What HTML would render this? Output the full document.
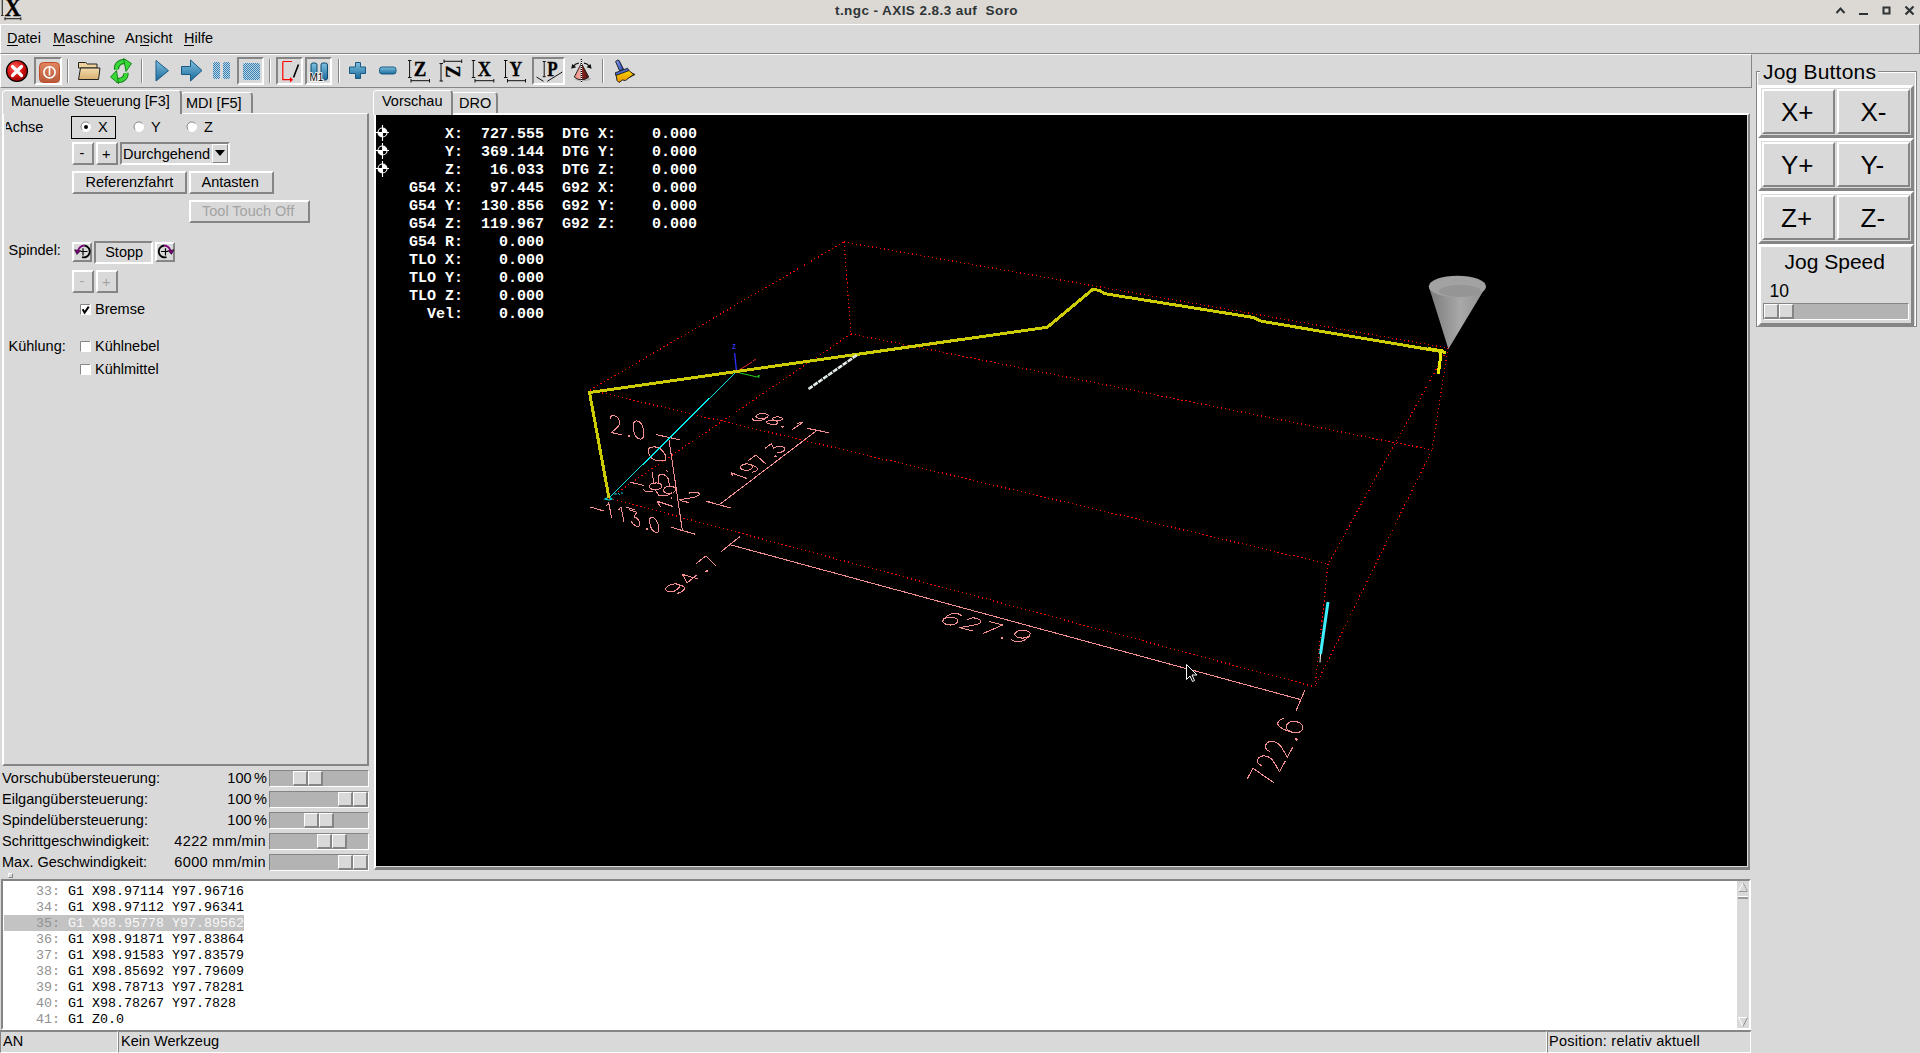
<!DOCTYPE html><html><head><meta charset="utf-8"><style>
*{box-sizing:border-box;margin:0;padding:0}
html,body{width:1920px;height:1053px;overflow:hidden;background:#d9d9d9;font-family:"Liberation Sans",sans-serif;font-size:14.5px;color:#000;position:relative}
.a{position:absolute}
.t{position:absolute;white-space:pre;line-height:1}
.m{font-family:"Liberation Mono",monospace}
svg{position:absolute;overflow:visible}
</style></head><body>
<div class="a" style="left:0px;top:0px;width:1920px;height:24px;background:#dcd9d5"></div>
<div class="a" style="left:0px;top:24px;width:1920px;height:1px;background:#fff"></div>
<div class="t" style="left:835px;top:3.57px;font-size:13.5px;font-weight:bold;color:#2e3436;letter-spacing:0.42px">t.ngc - AXIS 2.8.3 auf  Soro</div>
<svg style="left:0;top:0" width="24" height="24" viewBox="0 0 24 24">
<text x="0" y="0" font-family="Liberation Serif" font-weight="bold" font-size="26" fill="#000" stroke="#000" stroke-width="0.4" transform="translate(4.8 16) scale(0.86 1)">X</text>
<path d="M2.3 -1v16.5M1 15.5h2.6M5 18.7h15.8M5 17.3v3M20.8 17.3v3" stroke="#333" stroke-width="1.2" fill="none"/>
</svg>
<svg style="left:1830px;top:0" width="90" height="24" viewBox="0 0 90 24">
<path d="M6.5 13L10.5 8.5L14.5 13" stroke="#2e3436" stroke-width="2" fill="none"/>
<path d="M29 14h9" stroke="#2e3436" stroke-width="2" fill="none"/>
<rect x="53.5" y="7.5" width="6" height="6" stroke="#2e3436" stroke-width="2" fill="none"/>
<path d="M75.5 6.5L83.5 14.5M83.5 6.5L75.5 14.5" stroke="#2e3436" stroke-width="2.2" fill="none"/>
</svg>
<div class="a" style="left:0px;top:24px;width:1920px;height:30px;background:#d9d9d9;border-style:solid;border-width:1px;border-color:#fff #858585 #858585 #fff"></div>
<div class="t" style="left:7px;top:30.73px;font-size:14.5px;">Datei</div>
<div class="t" style="left:53px;top:30.73px;font-size:14.5px;">Maschine</div>
<div class="t" style="left:125px;top:30.73px;font-size:14.5px;">Ansicht</div>
<div class="t" style="left:184px;top:30.73px;font-size:14.5px;">Hilfe</div>
<div class="a" style="left:7px;top:45px;width:11px;height:1px;background:#000"></div>
<div class="a" style="left:53px;top:45px;width:12px;height:1px;background:#000"></div>
<div class="a" style="left:140px;top:45px;width:9px;height:1px;background:#000"></div>
<div class="a" style="left:184px;top:45px;width:10px;height:1px;background:#000"></div>
<div class="a" style="left:0px;top:54px;width:1752px;height:34px;background:#d9d9d9;border-style:solid;border-width:1px;border-color:#fff #858585 #858585 #fff"></div>
<div class="a" style="left:67px;top:59px;width:1px;height:24px;background:#858585"></div>
<div class="a" style="left:68px;top:59px;width:1px;height:24px;background:#fff"></div>
<div class="a" style="left:141px;top:59px;width:1px;height:24px;background:#858585"></div>
<div class="a" style="left:142px;top:59px;width:1px;height:24px;background:#fff"></div>
<div class="a" style="left:269px;top:59px;width:1px;height:24px;background:#858585"></div>
<div class="a" style="left:270px;top:59px;width:1px;height:24px;background:#fff"></div>
<div class="a" style="left:338px;top:59px;width:1px;height:24px;background:#858585"></div>
<div class="a" style="left:339px;top:59px;width:1px;height:24px;background:#fff"></div>
<div class="a" style="left:602px;top:59px;width:1px;height:24px;background:#858585"></div>
<div class="a" style="left:603px;top:59px;width:1px;height:24px;background:#fff"></div>
<div class="a" style="left:34px;top:57px;width:28px;height:28px;background:#d9d9d9;border-style:solid;border-width:2px;border-color:#858585 #fff #fff #858585"></div>
<div class="a" style="left:237px;top:57px;width:27px;height:28px;background:#d9d9d9;border-style:solid;border-width:2px;border-color:#858585 #fff #fff #858585"></div>
<div class="a" style="left:276px;top:57px;width:27px;height:28px;background:#d9d9d9;border-style:solid;border-width:2px;border-color:#858585 #fff #fff #858585"></div>
<div class="a" style="left:305px;top:57px;width:27px;height:28px;background:#d9d9d9;border-style:solid;border-width:2px;border-color:#858585 #fff #fff #858585"></div>
<div class="a" style="left:532px;top:57px;width:33px;height:28px;background:#d9d9d9;border-style:solid;border-width:2px;border-color:#858585 #fff #fff #858585"></div>
<svg style="left:0;top:54px" width="660" height="34" viewBox="0 54 660 34">
<defs>
<radialGradient id="gRed" cx="0.4" cy="0.35" r="0.7"><stop offset="0" stop-color="#ff5a5a"/><stop offset="0.6" stop-color="#d01010"/><stop offset="1" stop-color="#8a0000"/></radialGradient>
<linearGradient id="gOr" x1="0" y1="0" x2="0" y2="1"><stop offset="0" stop-color="#e08660"/><stop offset="1" stop-color="#b85a3a"/></linearGradient>
<linearGradient id="gBlue" x1="0" y1="0" x2="0" y2="1"><stop offset="0" stop-color="#7fc0e0"/><stop offset="1" stop-color="#1a6a9a"/></linearGradient>
<linearGradient id="gFold" x1="0" y1="0" x2="0" y2="1"><stop offset="0" stop-color="#f3dcae"/><stop offset="1" stop-color="#d9b070"/></linearGradient>
<linearGradient id="gCone" x1="0" y1="0" x2="1" y2="0"><stop offset="0" stop-color="#f6a0a0"/><stop offset="0.5" stop-color="#c04040"/><stop offset="1" stop-color="#501010"/></linearGradient>
<pattern id="dots" width="2" height="2" patternUnits="userSpaceOnUse"><rect width="1" height="1" fill="#3a7fb0"/><rect x="1" y="1" width="1" height="1" fill="#3a7fb0"/><rect x="1" width="1" height="1" fill="#b8d8ea"/><rect y="1" width="1" height="1" fill="#b8d8ea"/></pattern>
</defs>
<!-- estop -->
<circle cx="17" cy="71" r="10.5" fill="url(#gRed)" stroke="#000" stroke-width="1.2"/>
<path d="M12.5 66.5L21.5 75.5M21.5 66.5L12.5 75.5" stroke="#fff" stroke-width="3.2" stroke-linecap="round"/>
<!-- power -->
<rect x="39.5" y="62.5" width="20" height="20" rx="4" fill="url(#gOr)" stroke="#c04a2a" stroke-width="1"/>
<circle cx="49.5" cy="72.3" r="5.6" fill="none" stroke="#fff" stroke-width="1.6"/>
<path d="M49.5 66.5v9" stroke="#fff" stroke-width="1.6"/>
<!-- folder -->
<path d="M78.5 62.5h7l2 1.5h9.5v4h-18.5z" fill="#efd39c" stroke="#222" stroke-width="1"/>
<path d="M78.5 79.5l2-11.5h19.5l-1.5 11.5z" fill="url(#gFold)" stroke="#222" stroke-width="1"/>
<!-- reload -->
<path d="M116.5 69.5C116 64 121 60.5 125.5 62" stroke="#107a10" stroke-width="5.2" fill="none"/>
<path d="M116.5 69.5C116 64 121 60.5 125.5 62" stroke="#38d838" stroke-width="3.4" fill="none"/>
<path d="M123.5 58.5L131.5 63.5L126 71.5Z" fill="#38d838" stroke="#107a10" stroke-width="0.9" stroke-linejoin="round"/>
<path d="M126 73C126.5 78 121.5 81.5 117 80" stroke="#107a10" stroke-width="5.2" fill="none"/>
<path d="M126 73C126.5 78 121.5 81.5 117 80" stroke="#38d838" stroke-width="3.4" fill="none"/>
<path d="M118.5 83.5L110.5 77L116.5 70.5Z" fill="#38d838" stroke="#107a10" stroke-width="0.9" stroke-linejoin="round"/>
<!-- play -->
<path d="M156 60.5v20.5l12.5-10.3z" fill="url(#gBlue)" stroke="#185a86" stroke-width="1" stroke-linejoin="round"/>
<!-- step -->
<path d="M181.5 66.5h9v-6.5l11.5 10.5l-11.5 10.5v-6.5h-9z" fill="url(#gBlue)" stroke="#185a86" stroke-width="1" stroke-linejoin="round"/>
<!-- pause -->
<rect x="213" y="62" width="7" height="17" rx="2" fill="url(#dots)"/>
<rect x="223" y="62" width="7" height="17" rx="2" fill="url(#dots)"/>
<!-- stop -->
<rect x="243" y="63" width="17" height="17" rx="2" fill="url(#dots)"/>
<!-- block delete -->
<path d="M283 61.5h9M282.8 61.5v18.2h8" stroke="#f00" stroke-width="1.2" fill="none"/>
<path d="M290 77l3 2.7l-3 2.7z" fill="#f00"/>
<path d="M298.5 64.5l-5 13" stroke="#000" stroke-width="1.6"/>
<!-- M1 -->
<rect x="311" y="63" width="6" height="17" rx="2" fill="url(#gBlue)" stroke="#0a4a70" stroke-width="1"/>
<rect x="321" y="63" width="6.5" height="17" rx="2" fill="url(#gBlue)" stroke="#0a4a70" stroke-width="1"/>
<text x="309.5" y="81" font-family="Liberation Sans" font-size="10" fill="#000" stroke="#fff" stroke-width="1.6" paint-order="stroke">M1</text>
<!-- plus -->
<path d="M355.5 62.5h5v4.5h5v6.5h-5v5h-5v-5h-6v-6.5h6z" fill="url(#gBlue)" stroke="#185a86" stroke-width="1" stroke-linejoin="round"/>
<!-- minus -->
<rect x="379.5" y="67" width="16.5" height="7" rx="2.5" fill="url(#gBlue)" stroke="#185a86" stroke-width="1"/>
<!-- views -->
<g stroke="#111" stroke-width="1" fill="none">
<path d="M409.6 60.5v17M408 60.5h3.5M408 77.5h3.5M411 80.7h18.5M411 79v3.5M429.5 79v3.5"/>
<path d="M441 63.5v17.5M439.5 63.5h3.5M439.5 81h3.5M444 61.3h17.7M444 59.5v3.5M461.7 59.5v3.5"/>
<path d="M473.3 60.5v17M471.8 60.5h3.5M471.8 77.5h3.5M475 80.7h18.8M475 79v3.5M493.8 79v3.5"/>
<path d="M505.5 60.5v17M504 60.5h3.5M504 77.5h3.5M507.5 80.7h18M507.5 79v3.5M525.5 79v3.5"/>
<path d="M544.2 61.5v15.2M542.7 61.5h3M542.7 76.7h3"/>
<path d="M536.5 77l7 4.3M547.3 81.3l15-9.3"/>
</g>
<text transform="translate(413.8 76.2) scale(0.95 1)" font-family="Liberation Serif" font-weight="bold" font-size="20" fill="#000" stroke="#000" stroke-width="0.3">Z</text>
<text transform="translate(445.8 65.5) rotate(90) scale(0.92 1)" x="0" y="0" font-family="Liberation Serif" font-weight="bold" font-size="20" fill="#000" stroke="#000" stroke-width="0.3">Z</text>
<text transform="translate(477.8 76.2) scale(0.92 1)" font-family="Liberation Serif" font-weight="bold" font-size="20" fill="#000" stroke="#000" stroke-width="0.3">X</text>
<text transform="translate(509.5 76.2) scale(0.88 1)" font-family="Liberation Serif" font-weight="bold" font-size="20" fill="#000" stroke="#000" stroke-width="0.3">Y</text>
<text transform="translate(547.2 76.4) scale(0.85 1)" font-family="Liberation Serif" font-weight="bold" font-size="20" fill="#000" stroke="#000" stroke-width="0.3">P</text>
<!-- rotate cone -->
<defs>
<linearGradient id="gConeL" x1="0" y1="0" x2="1" y2="0"><stop offset="0" stop-color="#f08a80"/><stop offset="1" stop-color="#f4b0a8"/></linearGradient>
<linearGradient id="gConeR" x1="0" y1="0" x2="1" y2="0"><stop offset="0" stop-color="#902820"/><stop offset="1" stop-color="#501010"/></linearGradient>
<linearGradient id="gBr" x1="0" y1="0" x2="0" y2="1"><stop offset="0" stop-color="#f8d800"/><stop offset="1" stop-color="#e89000"/></linearGradient>
<linearGradient id="gHd" x1="0" y1="0" x2="1" y2="0"><stop offset="0" stop-color="#8aa0f0"/><stop offset="1" stop-color="#2040b0"/></linearGradient>
</defs>
<ellipse cx="583" cy="79" rx="8" ry="2.2" fill="#000" opacity="0.18"/>
<path d="M581.4 63.3L574.3 77Q577.5 79.8 581.4 79.8V63.3Z" fill="url(#gConeL)" stroke="#111" stroke-width="0.9" stroke-linejoin="round"/>
<path d="M581.4 63.3L588.7 77Q585.5 79.8 581.4 79.8V63.3Z" fill="url(#gConeR)" stroke="#111" stroke-width="0.9" stroke-linejoin="round"/>
<path d="M581.4 59v24" stroke="#fff" stroke-width="1.3"/>
<path d="M581.4 59v24" stroke="#000" stroke-width="1.3" stroke-dasharray="1 1"/>
<path d="M578.8 63.2Q575.5 63.5 573.5 66.2M584 63.2Q587.3 63.5 589.3 66.2" stroke="#111" stroke-width="1.2" fill="none"/>
<path d="M571.2 68.7L572.2 63.9L576.3 67.3Z M591.6 68.7L590.6 63.9L586.5 67.3Z" fill="#111"/>
<!-- brush -->
<path d="M630.5 72.5L635 74.5L627 78.5Z" fill="#e8b000" stroke="#111" stroke-width="0.9" stroke-linejoin="round"/>
<path d="M615.5 74.5L628.5 70L633.5 74.5L628 78.5L625.5 80.5L622.5 80L619 82.5L617 80.5L616.5 77Z" fill="url(#gBr)" stroke="#111" stroke-width="0.9" stroke-linejoin="round"/>
<path d="M615.2 72.8L627.6 68.2L628.8 70.7L616.2 75.3Z" fill="#4a68c8" stroke="#111" stroke-width="0.8" stroke-linejoin="round"/>
<path d="M615.6 61.6Q617.2 59.2 619.2 60.6L623.5 69.2L619.6 70.8Z" fill="url(#gHd)" stroke="#111" stroke-width="0.9" stroke-linejoin="round"/>
</svg>
<div class="a" style="left:2px;top:113px;width:367px;height:653px;border-style:solid;border-width:1px 2px 2px 2px;border-color:#fff #858585 #858585 #fff"></div>
<div class="a" style="left:181px;top:92px;width:72px;height:21px;background:#d9d9d9;border-style:solid;border-width:1px 2px 0 1px;border-color:#fff #858585 #fff #fff;border-radius:4px 4px 0 0"></div>
<div class="t" style="left:186px;top:95.73px;font-size:14.5px;">MDI [F5]</div>
<div class="a" style="left:2px;top:90px;width:180px;height:24px;background:#d9d9d9;border-style:solid;border-width:1px 2px 0 1px;border-color:#fff #858585 #fff #fff;border-radius:4px 4px 0 0"></div>
<div class="t" style="left:11px;top:93.73px;font-size:14.5px;">Manuelle Steuerung [F3]</div>
<div class="a" style="left:5.5px;top:116px;width:50px;height:22px;overflow:hidden"><div class="t" style="left:-2.5px;top:3.53px;font-size:14.5px">Achse</div></div>
<div class="a" style="left:71px;top:116px;width:45px;height:23px;border:1.5px solid #000"></div>
<svg style="left:80px;top:120.8px" width="12" height="12" viewBox="0 0 12 12"><circle cx="6" cy="6" r="4.6" fill="#fff" stroke="#fff" stroke-width="1"/><path d="M2.2 8.8A4.6 4.6 0 0 1 9.4 2.6" stroke="#858585" stroke-width="1" fill="none"/><circle cx="6" cy="6" r="2" fill="#000"/></svg>
<div class="t" style="left:98px;top:119.73px;font-size:14.5px;">X</div>
<svg style="left:133px;top:120.8px" width="12" height="12" viewBox="0 0 12 12"><circle cx="6" cy="6" r="4.6" fill="#fff" stroke="#fff" stroke-width="1"/><path d="M2.2 8.8A4.6 4.6 0 0 1 9.4 2.6" stroke="#858585" stroke-width="1" fill="none"/></svg>
<div class="t" style="left:151px;top:119.73px;font-size:14.5px;">Y</div>
<svg style="left:186px;top:120.8px" width="12" height="12" viewBox="0 0 12 12"><circle cx="6" cy="6" r="4.6" fill="#fff" stroke="#fff" stroke-width="1"/><path d="M2.2 8.8A4.6 4.6 0 0 1 9.4 2.6" stroke="#858585" stroke-width="1" fill="none"/></svg>
<div class="t" style="left:204px;top:119.73px;font-size:14.5px;">Z</div>
<div class="a" style="left:72px;top:142px;width:22px;height:23px;background:#d9d9d9;border-style:solid;border-width:2px;border-color:#fff #858585 #858585 #fff"></div>
<div class="t" style="left:79.5px;top:145.73px;font-size:14.5px;">-</div>
<div class="a" style="left:96px;top:142px;width:22px;height:23px;background:#d9d9d9;border-style:solid;border-width:2px;border-color:#fff #858585 #858585 #fff"></div>
<div class="t" style="left:102px;top:146.73px;font-size:14.5px;">+</div>
<div class="a" style="left:120px;top:142px;width:110px;height:23px;background:#d9d9d9;border-style:solid;border-width:2px;border-color:#858585 #fff #fff #858585"></div>
<div class="a" style="left:122px;top:144px;width:90px;height:19px;background:#d9d9d9"></div>
<div class="t" style="left:123px;top:146.73px;font-size:14.5px;">Durchgehend</div>
<div class="a" style="left:212px;top:144px;width:16px;height:19px;background:#d9d9d9;border-style:solid;border-width:1px;border-color:#fff #858585 #858585 #fff"></div>
<svg style="left:213px;top:148px" width="14" height="10" viewBox="0 0 14 10"><path d="M2 2h10l-5 6z" fill="#000"/></svg>
<div class="a" style="left:72px;top:171px;width:115px;height:23px;background:#d9d9d9;border-style:solid;border-width:2px;border-color:#fff #858585 #858585 #fff"></div>
<div class="t" style="left:85.5px;top:174.73px;font-size:14.5px;">Referenzfahrt</div>
<div class="a" style="left:189px;top:171px;width:85px;height:23px;background:#d9d9d9;border-style:solid;border-width:2px;border-color:#fff #858585 #858585 #fff"></div>
<div class="t" style="left:201.5px;top:174.73px;font-size:14.5px;">Antasten</div>
<div class="a" style="left:189px;top:200px;width:121px;height:23px;background:#d9d9d9;border-style:solid;border-width:2px;border-color:#fff #858585 #858585 #fff"></div>
<div class="t" style="left:202px;top:203.73px;font-size:14.5px;color:#a3a3a3">Tool Touch Off</div>
<div class="t" style="left:8.5px;top:242.73px;font-size:14.5px;">Spindel:</div>
<div class="a" style="left:72px;top:242px;width:20px;height:20px;background:#d9d9d9;border-style:solid;border-width:2px;border-color:#fff #858585 #858585 #fff"></div>
<div class="a" style="left:94px;top:241px;width:59px;height:23px;background:#d9d9d9;border-style:solid;border-width:2px;border-color:#858585 #fff #fff #858585"></div>
<div class="t" style="left:105.2px;top:244.93px;font-size:14.5px;">Stopp</div>
<div class="a" style="left:155px;top:242px;width:20px;height:20px;background:#d9d9d9;border-style:solid;border-width:2px;border-color:#fff #858585 #858585 #fff"></div>
<svg style="left:72px;top:242px" width="104" height="20" viewBox="72 242 104 20">
<g><path d="M84.5 245.5A6 6 0 1 1 82 257.2" stroke="#000" stroke-width="1.8" fill="none"/>
<path d="M80.5 251.5H87.5M83 248.2V255.5" stroke="#000" stroke-width="1.2" fill="none"/>
<path d="M84.5 245.5Q80 245.8 78.2 250" stroke="#7a007a" stroke-width="1.8" fill="none"/>
<path d="M74.5 249.8L80.8 250.5L77 254.5Z" fill="#7a007a" stroke="#000" stroke-width="0.5"/></g>
<g transform="matrix(-1 0 0 1 248.5 0)"><path d="M84.5 245.5A6 6 0 1 1 82 257.2" stroke="#000" stroke-width="1.8" fill="none"/>
<path d="M80.5 251.5H87.5M83 248.2V255.5" stroke="#000" stroke-width="1.2" fill="none"/>
<path d="M84.5 245.5Q80 245.8 78.2 250" stroke="#7a007a" stroke-width="1.8" fill="none"/>
<path d="M74.5 249.8L80.8 250.5L77 254.5Z" fill="#7a007a" stroke="#000" stroke-width="0.5"/></g>
</svg>
<div class="a" style="left:72px;top:270px;width:22px;height:23px;background:#d9d9d9;border-style:solid;border-width:2px;border-color:#fff #858585 #858585 #fff"></div>
<div class="t" style="left:79.5px;top:273.73px;font-size:14.5px;color:#a3a3a3">-</div>
<div class="a" style="left:96px;top:270px;width:22px;height:23px;background:#d9d9d9;border-style:solid;border-width:2px;border-color:#fff #858585 #858585 #fff"></div>
<div class="t" style="left:102px;top:274.73px;font-size:14.5px;color:#a3a3a3">+</div>
<svg style="left:80px;top:304px" width="11" height="11" viewBox="0 0 11 11"><rect x="0" y="0" width="11" height="11" fill="#fff"/><path d="M0.5 10.5V0.5H10" stroke="#858585" stroke-width="1" fill="none"/><path d="M2.6 5.2L4.6 8.6L8.8 2.6" stroke="#000" stroke-width="2" fill="none"/></svg>
<div class="t" style="left:95px;top:301.73px;font-size:14.5px;">Bremse</div>
<div class="t" style="left:8.5px;top:338.73px;font-size:14.5px;">Kühlung:</div>
<svg style="left:80px;top:341px" width="11" height="11" viewBox="0 0 11 11"><rect x="0" y="0" width="11" height="11" fill="#fff"/><path d="M0.5 10.5V0.5H10" stroke="#858585" stroke-width="1" fill="none"/></svg>
<div class="t" style="left:95px;top:338.73px;font-size:14.5px;">Kühlnebel</div>
<svg style="left:80px;top:364px" width="11" height="11" viewBox="0 0 11 11"><rect x="0" y="0" width="11" height="11" fill="#fff"/><path d="M0.5 10.5V0.5H10" stroke="#858585" stroke-width="1" fill="none"/></svg>
<div class="t" style="left:95px;top:361.73px;font-size:14.5px;">Kühlmittel</div>
<div class="t" style="left:2px;top:771.03px;font-size:14.5px;">Vorschubübersteuerung:</div>
<div class="t" style="left:150px;width:117px;text-align:right;top:771.03px;font-size:14.5px">100<span style="letter-spacing:-1.5px"> </span>%</div>
<div class="a" style="left:269px;top:770px;width:100px;height:17px;background:#b3b3b3;border-style:solid;border-width:1px;border-color:#858585 #fff #fff #858585"></div>
<div class="a" style="left:293px;top:771px;width:15px;height:15px;background:#d9d9d9;border-style:solid;border-width:1px 2px 2px 1px;border-color:#fff #858585 #858585 #fff"></div>
<div class="a" style="left:308px;top:771px;width:15px;height:15px;background:#d9d9d9;border-style:solid;border-width:1px 2px 2px 1px;border-color:#fff #858585 #858585 #fff"></div>
<div class="t" style="left:2px;top:792.03px;font-size:14.5px;">Eilgangübersteuerung:</div>
<div class="t" style="left:150px;width:117px;text-align:right;top:792.03px;font-size:14.5px">100<span style="letter-spacing:-1.5px"> </span>%</div>
<div class="a" style="left:269px;top:791px;width:100px;height:17px;background:#b3b3b3;border-style:solid;border-width:1px;border-color:#858585 #fff #fff #858585"></div>
<div class="a" style="left:338px;top:792px;width:15px;height:15px;background:#d9d9d9;border-style:solid;border-width:1px 2px 2px 1px;border-color:#fff #858585 #858585 #fff"></div>
<div class="a" style="left:353px;top:792px;width:15px;height:15px;background:#d9d9d9;border-style:solid;border-width:1px 2px 2px 1px;border-color:#fff #858585 #858585 #fff"></div>
<div class="t" style="left:2px;top:813.03px;font-size:14.5px;">Spindelübersteuerung:</div>
<div class="t" style="left:150px;width:117px;text-align:right;top:813.03px;font-size:14.5px">100<span style="letter-spacing:-1.5px"> </span>%</div>
<div class="a" style="left:269px;top:812px;width:100px;height:17px;background:#b3b3b3;border-style:solid;border-width:1px;border-color:#858585 #fff #fff #858585"></div>
<div class="a" style="left:304px;top:813px;width:15px;height:15px;background:#d9d9d9;border-style:solid;border-width:1px 2px 2px 1px;border-color:#fff #858585 #858585 #fff"></div>
<div class="a" style="left:319px;top:813px;width:15px;height:15px;background:#d9d9d9;border-style:solid;border-width:1px 2px 2px 1px;border-color:#fff #858585 #858585 #fff"></div>
<div class="t" style="left:2px;top:834.03px;font-size:14.5px;">Schrittgeschwindigkeit:</div>
<div class="t" style="left:100px;width:166px;text-align:right;top:834.03px;font-size:14.5px;letter-spacing:0.35px">4222 mm/min</div>
<div class="a" style="left:269px;top:833px;width:100px;height:17px;background:#b3b3b3;border-style:solid;border-width:1px;border-color:#858585 #fff #fff #858585"></div>
<div class="a" style="left:317px;top:834px;width:15px;height:15px;background:#d9d9d9;border-style:solid;border-width:1px 2px 2px 1px;border-color:#fff #858585 #858585 #fff"></div>
<div class="a" style="left:332px;top:834px;width:15px;height:15px;background:#d9d9d9;border-style:solid;border-width:1px 2px 2px 1px;border-color:#fff #858585 #858585 #fff"></div>
<div class="t" style="left:2px;top:855.03px;font-size:14.5px;">Max. Geschwindigkeit:</div>
<div class="t" style="left:100px;width:166px;text-align:right;top:855.03px;font-size:14.5px;letter-spacing:0.35px">6000 mm/min</div>
<div class="a" style="left:269px;top:854px;width:100px;height:17px;background:#b3b3b3;border-style:solid;border-width:1px;border-color:#858585 #fff #fff #858585"></div>
<div class="a" style="left:338px;top:855px;width:15px;height:15px;background:#d9d9d9;border-style:solid;border-width:1px 2px 2px 1px;border-color:#fff #858585 #858585 #fff"></div>
<div class="a" style="left:353px;top:855px;width:15px;height:15px;background:#d9d9d9;border-style:solid;border-width:1px 2px 2px 1px;border-color:#fff #858585 #858585 #fff"></div>
<div class="a" style="left:374px;top:113px;width:1376px;height:757px;border-style:solid;border-width:2px 2px 3px 2px;border-color:#fff #858585 #858585 #fff"></div>
<div class="a" style="left:376px;top:115px;width:1371px;height:751px;background:#000"></div>
<div class="a" style="left:451px;top:92px;width:47px;height:21px;background:#d9d9d9;border-style:solid;border-width:1px 2px 0 1px;border-color:#fff #858585 #fff #fff;border-radius:4px 4px 0 0"></div>
<div class="t" style="left:459px;top:95.73px;font-size:14.5px;">DRO</div>
<div class="a" style="left:373px;top:90px;width:80px;height:25px;background:#d9d9d9;border-style:solid;border-width:1px 2px 0 1px;border-color:#fff #858585 #fff #fff;border-radius:4px 4px 0 0"></div>
<div class="t" style="left:382px;top:93.73px;font-size:14.5px;">Vorschau</div>
<div class="t m" style="left:409px;top:126.80px;font-size:15px;font-weight:bold;color:#fff">    X:  727.555  DTG X:    0.000</div>
<div class="t m" style="left:409px;top:144.80px;font-size:15px;font-weight:bold;color:#fff">    Y:  369.144  DTG Y:    0.000</div>
<div class="t m" style="left:409px;top:162.80px;font-size:15px;font-weight:bold;color:#fff">    Z:   16.033  DTG Z:    0.000</div>
<div class="t m" style="left:409px;top:180.80px;font-size:15px;font-weight:bold;color:#fff">G54 X:   97.445  G92 X:    0.000</div>
<div class="t m" style="left:409px;top:198.80px;font-size:15px;font-weight:bold;color:#fff">G54 Y:  130.856  G92 Y:    0.000</div>
<div class="t m" style="left:409px;top:216.80px;font-size:15px;font-weight:bold;color:#fff">G54 Z:  119.967  G92 Z:    0.000</div>
<div class="t m" style="left:409px;top:234.80px;font-size:15px;font-weight:bold;color:#fff">G54 R:    0.000</div>
<div class="t m" style="left:409px;top:252.80px;font-size:15px;font-weight:bold;color:#fff">TLO X:    0.000</div>
<div class="t m" style="left:409px;top:270.80px;font-size:15px;font-weight:bold;color:#fff">TLO Y:    0.000</div>
<div class="t m" style="left:409px;top:288.80px;font-size:15px;font-weight:bold;color:#fff">TLO Z:    0.000</div>
<div class="t m" style="left:409px;top:306.80px;font-size:15px;font-weight:bold;color:#fff">  Vel:    0.000</div>
<svg style="left:374px;top:123.0px" width="18" height="19" viewBox="374 123.0 18 19">
<circle cx="382.5" cy="132.5" r="4.5" fill="none" stroke="#fff" stroke-width="1.1"/>
<path d="M382.5 132.5V128.0A4.5 4.5 0 0 1 387 132.5Z M382.5 132.5V137.0A4.5 4.5 0 0 1 378 132.5Z" fill="#fff"/>
<path d="M375.8 132.5H389M382.5 124.9V141.0" stroke="#fff" stroke-width="1.1"/>
</svg>
<svg style="left:374px;top:141.0px" width="18" height="19" viewBox="374 141.0 18 19">
<circle cx="382.5" cy="150.5" r="4.5" fill="none" stroke="#fff" stroke-width="1.1"/>
<path d="M382.5 150.5V146.0A4.5 4.5 0 0 1 387 150.5Z M382.5 150.5V155.0A4.5 4.5 0 0 1 378 150.5Z" fill="#fff"/>
<path d="M375.8 150.5H389M382.5 142.9V159.0" stroke="#fff" stroke-width="1.1"/>
</svg>
<svg style="left:374px;top:159.0px" width="18" height="19" viewBox="374 159.0 18 19">
<circle cx="382.5" cy="168.5" r="4.5" fill="none" stroke="#fff" stroke-width="1.1"/>
<path d="M382.5 168.5V164.0A4.5 4.5 0 0 1 387 168.5Z M382.5 168.5V173.0A4.5 4.5 0 0 1 378 168.5Z" fill="#fff"/>
<path d="M375.8 168.5H389M382.5 160.9V177.0" stroke="#fff" stroke-width="1.1"/>
</svg>
<svg style="left:376px;top:115px" width="1372" height="752" viewBox="376 115 1372 752">
<g stroke="#ff0000" stroke-width="1.2" stroke-dasharray="1.15 2.91" shape-rendering="crispEdges" fill="none">
<path d="M590 390L844 242"/>
<path d="M844 242L851 334"/>
<path d="M851 334L609 498"/>
<path d="M609 498L590 390"/>
<path d="M844 242L1448 348"/>
<path d="M851 334L1432 450"/>
<path d="M590 390L1328 564"/>
<path d="M609 498L1315 687"/>
<path d="M1448 348L1432 450"/>
<path d="M1448 348L1328 564"/>
<path d="M1432 450L1315 687"/>
<path d="M1328 564L1315 687"/>
</g>
<g stroke="#f29090" stroke-width="1.05" fill="none" stroke-linecap="round" stroke-linejoin="round" shape-rendering="crispEdges">
<path d="M731.9 545.2L1299.6 699.3"/>
<path d="M721 551.7L739.5 537"/>
<path d="M1305 690L1296 710.8"/>
<path d="M720.5 503.8L816.2 430.9"/>
<path d="M706.8 501.6L730.2 507.8"/>
<path d="M807.1 428.3L828.2 432.6"/>
<path d="M668.6 437.2L682.3 530"/>
<path d="M656.4 434.7L680 439.8"/>
<path d="M671.6 527.4L694.4 534"/>
<path d="M590.3 507L604 511"/>
<path d="M630.3 482.2L644 485.5"/>
<path d="M707.1 501.2L715 503.8"/>
<path d="M626.3 507.2L635 509.8"/>
<g transform="matrix(1.37 0.34 -0.78 0.77 950.8 612)"><path transform="translate(0 0)" d="M9 1.5C8 0.5 6.5 0 5 0C1.5 0 0 3.5 0 8C0 12 2 14 5 14C8 14 10 12 10 9.5C10 7 8 5 5 5C2.5 5 0.5 6.5 0 9" vector-effect="non-scaling-stroke"/><path transform="translate(14 0)" d="M0.5 3.5C0.5 1.5 2.5 0 5 0C7.5 0 9.5 1.5 9.5 4C9.5 6.5 7 8.5 0 14H10" vector-effect="non-scaling-stroke"/><path transform="translate(28 0)" d="M0 0H10L3.5 14" vector-effect="non-scaling-stroke"/><path transform="translate(42 0)" d="M2.6 13.2h1v1h-1z" vector-effect="non-scaling-stroke"/><path transform="translate(50 0)" d="M10 5C9.5 7.5 7.5 9 5 9C2 9 0 7 0 4.5C0 2 2 0 5 0C8 0 10 2 10 6C10 10.5 8.5 14 5 14C3.5 14 2 13.5 1 12.5" vector-effect="non-scaling-stroke"/></g>
<g transform="matrix(0.93 -0.74 1.1 0.32 663 590)"><path transform="translate(0 0)" d="M10 5C9.5 7.5 7.5 9 5 9C2 9 0 7 0 4.5C0 2 2 0 5 0C8 0 10 2 10 6C10 10.5 8.5 14 5 14C3.5 14 2 13.5 1 12.5" vector-effect="non-scaling-stroke"/><path transform="translate(14 0)" d="M7 14V0L0 10H10" vector-effect="non-scaling-stroke"/><path transform="translate(28 0)" d="M2.6 13.2h1v1h-1z" vector-effect="non-scaling-stroke"/><path transform="translate(36 0)" d="M0 0H10L3.5 14" vector-effect="non-scaling-stroke"/></g>
<g transform="matrix(0.56 -1.03 1.73 0.54 1247.4 778.6)"><path transform="translate(0 0)" d="M0 0H10L3.5 14" vector-effect="non-scaling-stroke"/><path transform="translate(14 0)" d="M0.5 3.5C0.5 1.5 2.5 0 5 0C7.5 0 9.5 1.5 9.5 4C9.5 6.5 7 8.5 0 14H10" vector-effect="non-scaling-stroke"/><path transform="translate(28 0)" d="M0.5 3.5C0.5 1.5 2.5 0 5 0C7.5 0 9.5 1.5 9.5 4C9.5 6.5 7 8.5 0 14H10" vector-effect="non-scaling-stroke"/><path transform="translate(42 0)" d="M2.6 13.2h1v1h-1z" vector-effect="non-scaling-stroke"/><path transform="translate(50 0)" d="M9 1.5C8 0.5 6.5 0 5 0C1.5 0 0 3.5 0 8C0 12 2 14 5 14C8 14 10 12 10 9.5C10 7 8 5 5 5C2.5 5 0.5 6.5 0 9" vector-effect="non-scaling-stroke"/></g>
<g transform="matrix(0.74 -0.54 1.06 0.38 727.7 475.6)"><path transform="translate(0 0)" d="M2 3L5 0V14" vector-effect="non-scaling-stroke"/><path transform="translate(14 0)" d="M10 5C9.5 7.5 7.5 9 5 9C2 9 0 7 0 4.5C0 2 2 0 5 0C8 0 10 2 10 6C10 10.5 8.5 14 5 14C3.5 14 2 13.5 1 12.5" vector-effect="non-scaling-stroke"/><path transform="translate(28 0)" d="M0 0H10L3.5 14" vector-effect="non-scaling-stroke"/><path transform="translate(42 0)" d="M2.6 13.2h1v1h-1z" vector-effect="non-scaling-stroke"/><path transform="translate(50 0)" d="M1 0H9L4.5 5.5C8 5.5 10 7.5 10 10C10 12.5 8 14 5 14C2.5 14 1 13 0 11.5" vector-effect="non-scaling-stroke"/></g>
<g transform="matrix(1.04 0.24 -0.73 0.49 760.3 412.6)"><path transform="translate(0 0)" d="M10 5C9.5 7.5 7.5 9 5 9C2 9 0 7 0 4.5C0 2 2 0 5 0C8 0 10 2 10 6C10 10.5 8.5 14 5 14C3.5 14 2 13.5 1 12.5" vector-effect="non-scaling-stroke"/><path transform="translate(14 0)" d="M5 0C2 0 1 1.5 1 3.5C1 5.5 3 6.5 5 7C7.5 7.5 10 9 10 11C10 13 8 14 5 14C2 14 0 13 0 11C0 9 2.5 7.5 5 7C7 6.5 9 5.5 9 3.5C9 1.5 8 0 5 0Z" vector-effect="non-scaling-stroke"/><path transform="translate(28 0)" d="M2.6 13.2h1v1h-1z" vector-effect="non-scaling-stroke"/><path transform="translate(36 0)" d="M2 3L5 0V14" vector-effect="non-scaling-stroke"/></g>
<g transform="matrix(1.05 0.24 0.18 1.29 608.9 414.5)"><path transform="translate(0 0)" d="M0.5 3.5C0.5 1.5 2.5 0 5 0C7.5 0 9.5 1.5 9.5 4C9.5 6.5 7 8.5 0 14H10" vector-effect="non-scaling-stroke"/><path transform="translate(14 0)" d="M2.6 13.2h1v1h-1z" vector-effect="non-scaling-stroke"/><path transform="translate(22 0)" d="M5 0C1.5 0 0 3.5 0 7C0 10.5 1.5 14 5 14C8.5 14 10 10.5 10 7C10 3.5 8.5 0 5 0Z" vector-effect="non-scaling-stroke"/></g>
<g transform="matrix(0.88 0.29 0.21 1.07 604.3 501.5)"><path transform="translate(0 0)" d="M2 3L5 0V14" vector-effect="non-scaling-stroke"/><path transform="translate(14 0)" d="M2 3L5 0V14" vector-effect="non-scaling-stroke"/><path transform="translate(28 0)" d="M1 0H9L4.5 5.5C8 5.5 10 7.5 10 10C10 12.5 8 14 5 14C2.5 14 1 13 0 11.5" vector-effect="non-scaling-stroke"/><path transform="translate(42 0)" d="M2.6 13.2h1v1h-1z" vector-effect="non-scaling-stroke"/><path transform="translate(50 0)" d="M5 0C1.5 0 0 3.5 0 7C0 10.5 1.5 14 5 14C8.5 14 10 10.5 10 7C10 3.5 8.5 0 5 0Z" vector-effect="non-scaling-stroke"/></g>
<path d="M648.3 448.6C651 446.5 653 446.8 655.6 447C659 447.5 662.5 450 664.9 454C665.8 456 666 458.5 665.6 460.3L656.3 460.6C653.5 459.8 651.5 458.5 650.3 456.6C648.5 454 648 451 648.3 448.6Z"/>
<path d="M652.3 472.9L653.6 482.2"/>
<path d="M658.2 482.6L658.2 475.9C659.5 474.5 661 474.2 662.9 474.2C665 474.8 667 476.5 668.2 478.6L669.5 485.9"/>
<path d="M649.3 486.3a6.3 3.3 -5 1 0 12.6 0a6.3 3.3 -5 1 0 -12.6 0Z"/>
<path d="M663.5 489.9a6 3.7 -5 1 0 12 0a6 3.7 -5 1 0 -12 0Z"/>
<path d="M643.3 489.2L645 491.2L652.9 491.5"/>
<path d="M654.9 489.2L658.9 495.2L667.6 495.5L671.5 492.5"/>
<path d="M671.9 497.3V498.3"/>
<path d="M666.2 470.3L667.9 471.9"/>
<path d="M689.2 493.2L690.8 492.2L698.1 492.2L699.8 494.5L694.8 497.2L679.5 499.8"/>
<path d="M680.9 500.8L688.8 502.5"/>
<path d="M657.2 501.2L660.2 506.5"/>
<path d="M657.2 501.2L672.9 506.5"/>
</g>
<path d="M609 498L736 372" stroke="#00e8e8" stroke-width="1.1" fill="none" shape-rendering="crispEdges"/>
<path d="M736.5 371L734.6 353" stroke="#3030ff" stroke-width="1.3" fill="none"/>
<path d="M732.5 344.5h2.5l-2.5 4h3" stroke="#3030ff" stroke-width="1" fill="none"/>
<path d="M736 372L752 362M753 360.5l3 -1" stroke="#e03030" stroke-width="1" fill="none"/>
<path d="M736 372L757 377M757 377l3 -1.5M758 375l1 3" stroke="#20d020" stroke-width="1" fill="none"/>
<path d="M605 499l4-2l3 2l-3 1z" stroke="#00e0e0" stroke-width="1.2" fill="none"/><path d="M614 494h3M618 493l2 2M621 493h2" stroke="#00e0e0" stroke-width="0.9"/>
<path d="M609 498L589.5 392.5L1047.4 327.2L1093 289.2L1099.6 290.6L1105.3 293.8L1253 317.4L1261.6 321.3L1446 352.3" stroke="#cccc00" stroke-width="3" fill="none" stroke-linejoin="round" shape-rendering="crispEdges"/>
<path d="M1441.2 351.5L1438.3 374" stroke="#e8e800" stroke-width="3" fill="none" shape-rendering="crispEdges"/>
<path d="M1427.5 348.5l15 2.5l2.5 2" stroke="#d8d800" stroke-width="3" fill="none" shape-rendering="crispEdges"/>
<path d="M808.5 389L857 355" stroke="#e8f0f0" stroke-width="2.6" stroke-dasharray="5 1" fill="none"/>
<path d="M809 388.5L856 356" stroke="#708080" stroke-width="0.8" stroke-dasharray="1 4" fill="none"/>
<path d="M1328 602L1320.5 654" stroke="#40f0ff" stroke-width="3" fill="none"/>
<path d="M1320.5 654L1320 662.5" stroke="#fff" stroke-width="1" fill="none"/>
<defs><linearGradient id="gc" x1="0" y1="0" x2="1" y2="0"><stop offset="0" stop-color="#7a7a7a"/><stop offset="0.55" stop-color="#a8a8a8"/><stop offset="1" stop-color="#909090"/></linearGradient></defs>
<path d="M1428.8 286.5L1448.4 349L1486 286.5Z" fill="url(#gc)"/>
<ellipse cx="1457.4" cy="286.5" rx="28.6" ry="10.8" fill="#a2a2a2"/>
<ellipse cx="1460" cy="291" rx="21" ry="6" fill="#8c8c8c" opacity="0.6"/>
<path d="M1186.5 664.5v15l3.5-3.5l2.5 5.5l2-1l-2.5-5.5h5z" fill="#000" stroke="#fff" stroke-width="1"/>
</svg>
<div class="a" style="left:1756px;top:71px;width:161px;height:256px;border:1px solid #858585"></div>
<div class="a" style="left:1757px;top:72px;width:159px;height:254px;border:1px solid #fff"></div>
<div class="a" style="left:1760px;top:60px;width:118px;height:20px;background:#d9d9d9"></div>
<div class="t" style="left:1763px;top:60.72px;font-size:21px;letter-spacing:0.2px">Jog Buttons</div>
<div class="a" style="left:1758px;top:85px;width:156px;height:53px;background:#d9d9d9;border-style:solid;border-width:3px;border-color:#fff #858585 #858585 #fff"></div>
<div class="a" style="left:1762px;top:89px;width:73px;height:45px;background:#d9d9d9;border-style:solid;border-width:2px;border-color:#fff #858585 #858585 #fff"></div>
<div class="a" style="left:1837px;top:89px;width:73px;height:45px;background:#d9d9d9;border-style:solid;border-width:2px;border-color:#fff #858585 #858585 #fff"></div>
<div class="t" style="left:1781px;top:99.49px;font-size:26px;">X+</div>
<div class="t" style="left:1860.5px;top:99.49px;font-size:26px;">X-</div>
<div class="a" style="left:1758px;top:138px;width:156px;height:53px;background:#d9d9d9;border-style:solid;border-width:3px;border-color:#fff #858585 #858585 #fff"></div>
<div class="a" style="left:1762px;top:142px;width:73px;height:45px;background:#d9d9d9;border-style:solid;border-width:2px;border-color:#fff #858585 #858585 #fff"></div>
<div class="a" style="left:1837px;top:142px;width:73px;height:45px;background:#d9d9d9;border-style:solid;border-width:2px;border-color:#fff #858585 #858585 #fff"></div>
<div class="t" style="left:1781px;top:152.49px;font-size:26px;">Y+</div>
<div class="t" style="left:1860.5px;top:152.49px;font-size:26px;">Y-</div>
<div class="a" style="left:1758px;top:191px;width:156px;height:53px;background:#d9d9d9;border-style:solid;border-width:3px;border-color:#fff #858585 #858585 #fff"></div>
<div class="a" style="left:1762px;top:195px;width:73px;height:45px;background:#d9d9d9;border-style:solid;border-width:2px;border-color:#fff #858585 #858585 #fff"></div>
<div class="a" style="left:1837px;top:195px;width:73px;height:45px;background:#d9d9d9;border-style:solid;border-width:2px;border-color:#fff #858585 #858585 #fff"></div>
<div class="t" style="left:1781px;top:205.49px;font-size:26px;">Z+</div>
<div class="t" style="left:1860.5px;top:205.49px;font-size:26px;">Z-</div>
<div class="a" style="left:1758px;top:244px;width:156px;height:82px;background:#d9d9d9;border-style:solid;border-width:3px;border-color:#fff #858585 #858585 #fff"></div>
<div class="t" style="left:1784.5px;top:251.22px;font-size:21px;">Jog Speed</div>
<div class="t" style="left:1769.5px;top:282.99px;font-size:17.5px;">10</div>
<div class="a" style="left:1763px;top:303px;width:146px;height:17px;background:#b3b3b3;border-style:solid;border-width:1px;border-color:#858585 #fff #fff #858585"></div>
<div class="a" style="left:1764px;top:304px;width:15px;height:15px;background:#d9d9d9;border-style:solid;border-width:1px 2px 2px 1px;border-color:#fff #858585 #858585 #fff"></div>
<div class="a" style="left:1779px;top:304px;width:15px;height:15px;background:#d9d9d9;border-style:solid;border-width:1px 2px 2px 1px;border-color:#fff #858585 #858585 #fff"></div>
<div class="a" style="left:8px;top:873px;width:5px;height:5px;background:#d9d9d9;border-style:solid;border-width:1px;border-color:#fff #858585 #858585 #fff"></div>
<div class="a" style="left:1px;top:879px;width:1750px;height:151px;background:#fff;border-style:solid;border-width:2px;border-color:#858585 #fff #fff #858585"></div>
<div class="a" style="left:4px;top:915px;width:240px;height:16px;background:#c3c3c3"></div>
<div class="t m" style="left:4px;top:884.58px;font-size:13.33px"><span style="color:#929292">    33:</span><span style="color:#000"> G1 X98.97114 Y97.96716</span></div>
<div class="t m" style="left:4px;top:900.58px;font-size:13.33px"><span style="color:#929292">    34:</span><span style="color:#000"> G1 X98.97112 Y97.96341</span></div>
<div class="t m" style="left:4px;top:916.58px;font-size:13.33px"><span style="color:#929292">    35:</span><span style="color:#f8f8f8"> G1 X98.95778 Y97.89562</span></div>
<div class="t m" style="left:4px;top:932.58px;font-size:13.33px"><span style="color:#929292">    36:</span><span style="color:#000"> G1 X98.91871 Y97.83864</span></div>
<div class="t m" style="left:4px;top:948.58px;font-size:13.33px"><span style="color:#929292">    37:</span><span style="color:#000"> G1 X98.91583 Y97.83579</span></div>
<div class="t m" style="left:4px;top:964.58px;font-size:13.33px"><span style="color:#929292">    38:</span><span style="color:#000"> G1 X98.85692 Y97.79609</span></div>
<div class="t m" style="left:4px;top:980.58px;font-size:13.33px"><span style="color:#929292">    39:</span><span style="color:#000"> G1 X98.78713 Y97.78281</span></div>
<div class="t m" style="left:4px;top:996.58px;font-size:13.33px"><span style="color:#929292">    40:</span><span style="color:#000"> G1 X98.78267 Y97.7828</span></div>
<div class="t m" style="left:4px;top:1012.58px;font-size:13.33px"><span style="color:#929292">    41:</span><span style="color:#000"> G1 Z0.0</span></div>
<div class="a" style="left:1737px;top:881px;width:12px;height:147px;background:#d9d9d9"></div>
<svg style="left:1737px;top:881px" width="12" height="147" viewBox="0 0 12 147">
<path d="M6 1.5L1.5 10.5H10.5Z" fill="#d9d9d9" stroke="#fff" stroke-width="1"/><path d="M6 1.5L10.5 10.5H1.5" fill="none" stroke="#9a9a9a" stroke-width="1"/>
<path d="M1 17h10" stroke="#858585" stroke-width="1.5"/><path d="M1 15.5h10" stroke="#fff" stroke-width="1"/>
<path d="M6 145.5L1.5 136.5H10.5Z" fill="#d9d9d9" stroke="#fff" stroke-width="1"/><path d="M10.5 136.5L6 145.5" fill="none" stroke="#858585" stroke-width="1"/>
</svg>
<div class="a" style="left:0px;top:1030px;width:1751px;height:1px;background:#858585"></div>
<div class="a" style="left:0px;top:1031px;width:118px;height:22px;background:#d9d9d9;border-style:solid;border-width:1px;border-color:#858585 #fff #fff #858585"></div>
<div class="a" style="left:118px;top:1031px;width:1429px;height:22px;background:#d9d9d9;border-style:solid;border-width:1px;border-color:#858585 #fff #fff #858585"></div>
<div class="a" style="left:1547px;top:1031px;width:204px;height:22px;background:#d9d9d9;border-style:solid;border-width:1px;border-color:#858585 #fff #fff #858585"></div>
<div class="t" style="left:3px;top:1033.53px;font-size:14.5px;">AN</div>
<div class="t" style="left:121px;top:1033.53px;font-size:14.5px;">Kein Werkzeug</div>
<div class="t" style="left:1549px;top:1033.53px;font-size:14.5px;letter-spacing:0.27px">Position: relativ aktuell</div>
</body></html>
